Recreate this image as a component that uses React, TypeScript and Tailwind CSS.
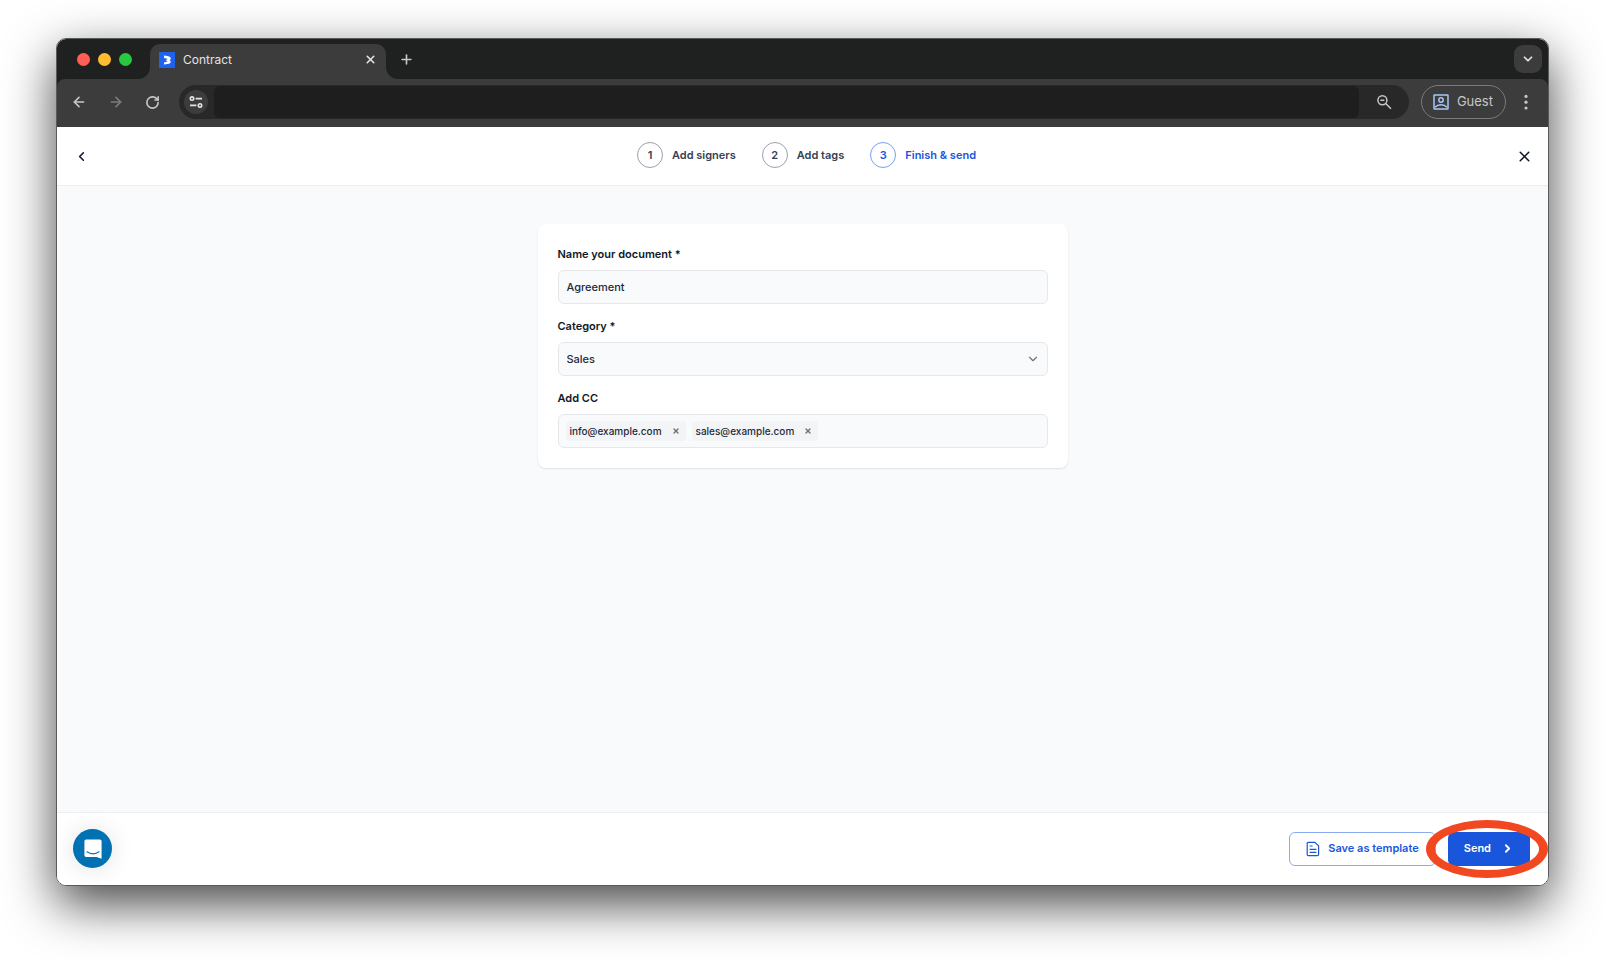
import { ArrowLeft, ArrowRight, ChevronDown, ChevronLeft, ChevronRight, Plus, RotateCw, X } from 'lucide-react';

const steps = [
  { id: 1, label: 'Add signers', active: false },
  { id: 2, label: 'Add tags', active: false },
  { id: 3, label: 'Finish & send', active: true },
];

const ccEmails = ['info@example.com', 'sales@example.com'];

function TabStrip() {
  return (
    <div className="flex h-10 items-center bg-[#1f2120] pr-1.5">
      <div className="flex gap-2 pr-1.5 pl-5">
        <span className="size-[13px] rounded-full bg-[#ff5f57]" />
        <span className="size-[13px] rounded-full bg-[#febc2e]" />
        <span className="size-[13px] rounded-full bg-[#28c840]" />
      </div>

      {/* Tab with flared bottom corners */}
      <span className="size-3 self-end bg-[#3c3c3c]">
        <span className="block size-full rounded-br-xl bg-[#1f2120]" />
      </span>
      <div className="flex h-[35px] w-[236px] items-center gap-2 self-end rounded-t-[10px] bg-[#3c3c3c] pr-2 pb-1 pl-[9px]">
        <svg viewBox="0 0 16 16" className="size-4" aria-hidden="true">
          <rect width="16" height="16" fill="#1d63ed" />
          <path d="M5 3.6L8.6 4.1Q11.8 4.7 11.8 6.6Q11.7 7.7 10.6 8.2Q11.8 8.7 11.8 9.9Q11.6 11.8 8.6 12.1L5 12.6V10.4L8.4 9.6V9L6.4 8.2L8.4 7.3V6.7L5 6Z" fill="#fff" />
        </svg>
        <span className="flex-1 text-xs leading-4 text-[#e3e3e3]">Contract</span>
        <button type="button" aria-label="Close tab" className="flex size-4 items-center justify-center text-[#e3e3e3]">
          <X size={13} strokeWidth={3} />
        </button>
      </div>
      <span className="size-3 self-end bg-[#3c3c3c]">
        <span className="block size-full rounded-bl-xl bg-[#1f2120]" />
      </span>

      <button type="button" aria-label="New tab" className="flex size-4 items-center justify-center text-[#c7c7c7]">
        <Plus size={15} strokeWidth={2.6} />
      </button>
      <button type="button" aria-label="Search tabs" className="ml-auto flex size-7 items-center justify-center rounded-[9px] bg-[#3c3c3c] text-[#e3e3e3]">
        <ChevronDown size={14} strokeWidth={3} />
      </button>
    </div>
  );
}

function Toolbar() {
  return (
    <div className="bg-[#1f2120]">
      <div className="flex h-12 items-center rounded-t-lg bg-[#3c3c3c] pr-[18px] pb-0.5 pl-3.5">
        <div className="flex items-center gap-[21px] pr-[19px]">
          <button type="button" aria-label="Back" className="text-[#c7c7c7]">
            <ArrowLeft size={16} strokeWidth={2.4} />
          </button>
          <button type="button" aria-label="Forward" className="text-[#7c7c7c]">
            <ArrowRight size={16} strokeWidth={2.4} />
          </button>
          <button type="button" aria-label="Reload" className="text-[#c7c7c7]">
            <RotateCw size={15} strokeWidth={2.6} />
          </button>
        </div>

        <div className="flex h-[34px] flex-1 items-center rounded-full bg-[#282828] pl-[5px]">
          <button type="button" aria-label="Site information" className="flex size-6 items-center justify-center rounded-full bg-[#3c3c3c] text-[#e3e3e3]">
            <svg viewBox="0 0 14 14" className="size-3.5" fill="none" stroke="currentColor" strokeWidth="1.6" aria-hidden="true">
              <circle cx="3" cy="3.6" r="1.7" />
              <path d="M6.6 3.6H13M1 10.4H7.4" />
              <circle cx="11" cy="10.4" r="1.7" />
            </svg>
          </button>
          <input aria-label="Address" className="ml-1.5 h-8 flex-1 rounded-md bg-[#1e1e1e] px-3 text-sm text-gray-200 outline-none" />
          <button type="button" aria-label="Zoom" className="px-[17px] text-[#c7c7c7]">
            <svg viewBox="0 0 16 16" className="size-4" fill="none" stroke="currentColor" strokeWidth="1.5" aria-hidden="true">
              <circle cx="6.4" cy="6.2" r="4.5" />
              <path d="M4.4 6.2H8.4M9.7 9.5L15 14.8" />
            </svg>
          </button>
        </div>

        <button type="button" className="ml-3 flex h-[34px] items-center gap-2 rounded-full border border-[#7a7a7a] pr-3 pl-[11px] text-[13px] text-[#c7c7c7]">
          <svg viewBox="0 0 16 16" className="size-4" fill="none" stroke="#a8c7fa" strokeWidth="1.5" aria-hidden="true">
            <rect x="1" y="1" width="14" height="14" rx="0.6" />
            <circle cx="8" cy="6" r="2.2" />
            <path d="M2 13.2C3.6 11.4 5.7 10.7 8 10.7s4.4 0.7 6 2.5" />
          </svg>
          Guest
        </button>
        <button type="button" aria-label="Menu" className="ml-4 text-[#c7c7c7]">
          <svg viewBox="0 0 8 16" className="h-4 w-2" fill="currentColor" aria-hidden="true">
            <circle cx="4" cy="2.4" r="1.6" />
            <circle cx="4" cy="8.2" r="1.6" />
            <circle cx="4" cy="14" r="1.6" />
          </svg>
        </button>
      </div>
    </div>
  );
}

function StepHeader() {
  return (
    <header className="flex h-[59px] items-center justify-between border-b border-[#eceef1] bg-white pr-3 pl-1">
      <button type="button" aria-label="Go back" className="flex size-10 items-center justify-center text-gray-900">
        <ChevronLeft size={15} strokeWidth={2.6} />
      </button>
      <ol className="flex gap-[26px] pb-0.5">
        {steps.map((step) => (
          <li
            key={step.id}
            className={`flex items-center gap-[9px] text-[11px] font-semibold ${step.active ? 'text-[#1a56db]' : 'text-gray-700'}`}
          >
            <span
              className={`flex size-[26px] items-center justify-center rounded-full border ${
                step.active ? 'border-[#76a0f5]' : 'border-gray-400'
              }`}
            >
              {step.id}
            </span>
            {step.label}
          </li>
        ))}
      </ol>
      <button type="button" aria-label="Close" className="flex size-6 items-center justify-center text-gray-900">
        <X size={17} strokeWidth={2.2} />
      </button>
    </header>
  );
}

function DocumentForm() {
  return (
    <form className="w-[530px] max-w-full space-y-3 rounded-lg bg-white p-5 shadow-[0_1px_2px_rgba(0,0,0,0.1)]">
      <div>
        <label htmlFor="name" className="mb-1.5 block text-[11px] leading-5 font-semibold text-gray-900">
          Name your document *
        </label>
        <input
          id="name"
          type="text"
          defaultValue="Agreement"
          className="block h-[34px] w-full rounded-md border border-gray-200 bg-[#f9fafb] px-2 text-[11px] font-medium text-gray-800"
        />
      </div>

      <div>
        <label htmlFor="category" className="mb-1.5 block text-[11px] leading-5 font-semibold text-gray-900">
          Category *
        </label>
        <div className="relative">
          <select
            id="category"
            className="block h-[34px] w-full appearance-none rounded-md border border-gray-200 bg-[#f9fafb] px-2 text-[11px] font-medium text-gray-800"
          >
            <option>Sales</option>
          </select>
          <ChevronDown size={14} className="pointer-events-none absolute top-2.5 right-2 text-gray-500" />
        </div>
      </div>

      <div>
        <label htmlFor="cc" className="mb-1.5 block text-[11px] leading-5 font-semibold text-gray-900">
          Add CC
        </label>
        <div className="flex h-[34px] items-center gap-1.5 rounded-md border border-gray-200 bg-[#f9fafb] px-[7px]">
          {ccEmails.map((email) => (
            <span key={email} className="flex h-5 items-center gap-2.5 rounded bg-gray-100 pr-1.5 pl-1 text-[10px] font-medium text-gray-800">
              {email}
              <button type="button" aria-label={`Remove ${email}`} className="text-gray-500">
                <X size={8} strokeWidth={4} />
              </button>
            </span>
          ))}
          <input id="cc" type="email" className="min-w-0 flex-1 bg-transparent text-[11px] outline-none" />
        </div>
      </div>
    </form>
  );
}

function Footer() {
  return (
    <footer className="flex items-center gap-3 border-t border-[#eceef1] bg-white pt-4 pr-[18px] pb-[17px] pl-4">
      <button type="button" aria-label="Open chat" className="flex size-[39px] items-center justify-center rounded-full bg-[#0071b2] shadow-[0_1px_24px_rgba(0,0,0,0.12)]">
        <svg viewBox="0 0 18 20" className="h-5 w-[18px]" fill="none" aria-hidden="true">
          <path d="M2.2 0.4H15.8Q17.6 0.4 17.6 2.2V19.8L12.5 18H2.2Q0.4 18 0.4 16.2V2.2Q0.4 0.4 2.2 0.4Z" fill="#fff" />
          <path d="M3 12.8C6.5 15.5 11.5 15.5 15 12.8" stroke="#0071b2" strokeWidth="1.1" strokeLinecap="round" />
        </svg>
      </button>

      <button type="button" className="ml-auto flex h-[34px] items-center gap-2 rounded-md border border-[#8aaaf0] px-4 text-[11px] font-semibold text-[#1a56db]">
        <svg viewBox="0 0 14 16" className="h-4 w-3.5" fill="none" stroke="currentColor" strokeWidth="1.2" aria-hidden="true">
          <path d="M2.4 1.4H8.8L12.6 4.8V13.4Q12.6 14.6 11.4 14.6H2.4Q1.2 14.6 1.2 13.4V2.6Q1.2 1.4 2.4 1.4Z" />
          <path d="M3.6 5H6.6M3.6 8.3H10.4M3.6 11.4H10.4" />
        </svg>
        Save as template
      </button>

      <div className="relative">
        <button type="button" className="flex h-[34px] items-center gap-2.5 rounded-md bg-[#1a56db] px-4 text-[11px] font-semibold text-white">
          Send
          <ChevronRight size={13} strokeWidth={3.4} />
        </button>
        {/* Highlight ring around the send button */}
        <span className="pointer-events-none absolute -inset-y-3 -right-[18px] -left-[22px] rounded-[50%] border-x-9 border-y-8 border-[#f24822]" />
      </div>
    </footer>
  );
}

export default function App() {
  return (
    <div className="flex min-h-screen flex-col bg-white pt-[38px] pr-[57px] pb-[74px] pl-14 font-['Inter',sans-serif]">
      <div className="flex flex-1 flex-col overflow-hidden rounded-[10px] border border-[#5a5a5a] shadow-[0_18px_50px_rgba(0,0,0,0.73)]">
        <TabStrip />
        <Toolbar />
        <StepHeader />
        <main className="flex flex-1 items-start justify-center bg-[#f9fafb] px-4 py-[38px]">
          <DocumentForm />
        </main>
        <Footer />
      </div>
    </div>
  );
}
